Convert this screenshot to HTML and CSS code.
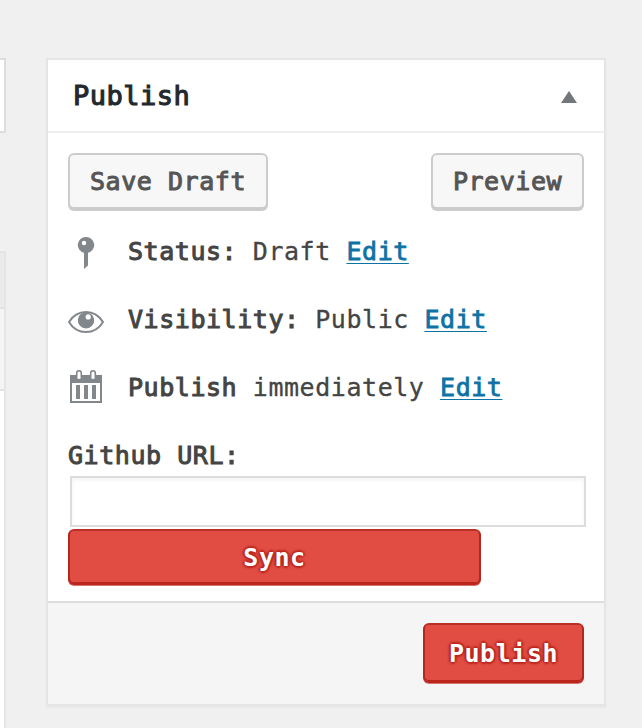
FILE: index.html
```html
<!DOCTYPE html>
<html lang="en">
<head>
<meta charset="utf-8">
<title>Publish</title>
<link rel="stylesheet" href="styles.css">
</head>
<body>
<div class="page">
  <div class="editor">
    <div class="title-field"></div>
    <div class="content-editor">
      <div class="tabs"></div>
      <div class="toolbar"></div>
      <div class="canvas"></div>
    </div>
  </div>
  <section class="postbox">
    <header class="postbox-header">
      <h2>Publish</h2>
      <svg class="toggle" width="16" height="12" viewBox="0 0 16 12"><path d="M8 0L16 12H0Z" fill="#72777c"/></svg>
    </header>
    <div class="postbox-body">
      <div class="actions">
        <button class="button save">Save Draft</button>
        <button class="button preview">Preview</button>
      </div>
      <div class="row">
        <svg class="icon" width="36" height="36" viewBox="0 0 36 36"><path fill="#82878c" fill-rule="evenodd" d="M18 2a8 8 0 0 1 2 15.8V30.5L16 34V17.8A8 8 0 0 1 18 2ZM16 5.8a2.2 2.2 0 1 0 0 4.4a2.2 2.2 0 1 0 0-4.4Z"/></svg>
        <p><b>Status:</b> Draft <a href="#">Edit</a></p>
      </div>
      <div class="row">
        <svg class="icon" width="36" height="36" viewBox="0 0 36 36"><path fill="none" stroke="#82878c" stroke-width="2" d="M1 19C9 5.600 27 5.600 35 19C27 32.400 9 32.400 1 19Z"/><path fill="#82878c" fill-rule="evenodd" d="M13 10.800Q18 8.300 23 10.800A8.200 8.200 0 1 1 13 10.800ZM20.200 11.300a2.600 2.600 0 1 0 0 5.200a2.600 2.600 0 1 0 0-5.200Z"/></svg>
        <p><b>Visibility:</b> Public <a href="#">Edit</a></p>
      </div>
      <div class="row">
        <svg class="icon calendar" width="36" height="36" viewBox="0 0 36 36"><path fill="#82878c" fill-rule="evenodd" d="M2 7H34V35H2ZM4 15V33H32V15Z"/><path fill="#82878c" d="M8 17h4v14H8zM16 17h4v14h-4zM24 17h4v14h-4z"/><g fill="none" stroke-linecap="round"><path stroke="#fff" stroke-width="4" d="M11 5V9M25 5V9"/><path stroke="#82878c" stroke-width="1.600" d="M8.700 9V5a2.300 2.300 0 0 1 4.600 0V9M22.700 9V5a2.300 2.300 0 0 1 4.600 0V9"/></g></svg>
        <p><b>Publish</b> immediately <a href="#">Edit</a></p>
      </div>
      <label class="url-label" for="url">Github URL:</label>
      <input class="url" id="url" type="text">
      <button class="button primary sync">Sync</button>
    </div>
    <footer class="postbox-footer">
      <button class="button primary publish">Publish</button>
    </footer>
  </section>
</div>
</body>
</html>
```
FILE: styles.css
```css
* { box-sizing: border-box; }

body {
  margin: 0;
  background: #f0f0f0;
  color: #444;
  font: 25px/34px "DejaVu Sans Mono", "Liberation Mono", monospace;
  letter-spacing: 0.55px;
  -webkit-text-stroke: 0.3px currentColor;
}

.page {
  display: grid;
  grid-template-columns: 6px 560px;
  column-gap: 40px;
  height: 728px;
  padding-top: 58px;
  overflow: hidden;
}

.editor { display: flex; flex-direction: column; }

.title-field {
  height: 75px;
  margin-bottom: 118px;
  border: 2px solid #ddd;
  border-left: 0;
  background: #fff;
}

.content-editor {
  flex: 1;
  display: flex;
  flex-direction: column;
  border: 2px solid #e5e5e5;
  border-width: 2px 2px 0 0;
}

.tabs { height: 54px; background: #ebebeb; }

.toolbar {
  height: 84px;
  border: 2px solid #e2e2e2;
  border-width: 2px 0;
  background: #f5f5f5;
}

.canvas { flex: 1; background: #fff; }

.postbox {
  height: 648px;
  border: 2px solid #e5e5e5;
  background: #fff;
  box-shadow: 0 2px 2px rgba(0, 0, 0, 0.04);
}

.postbox-header {
  display: flex;
  align-items: center;
  justify-content: space-between;
  height: 73px;
  padding: 1px 27px 0 25px;
  border-bottom: 2px solid #eee;
}

h2 {
  margin: 0;
  color: #23282d;
  font-size: 27px;
  font-weight: 400;
  letter-spacing: 0.5px;
  -webkit-text-stroke: 1.1px currentColor;
}

.toggle { margin-top: 1px; }

.postbox-body {
  display: flex;
  flex-direction: column;
  height: 468px;
  padding: 20px 20px 0;
}

.actions {
  display: flex;
  justify-content: space-between;
  margin-bottom: 26px;
}

.button {
  height: 56px;
  padding: 1px 0 0;
  border: 2px solid #ccc;
  border-radius: 6px;
  background: #f7f7f7;
  box-shadow: 0 2px 0 #ccc;
  color: #555;
  font: inherit;
  letter-spacing: inherit;
  -webkit-text-stroke: 1px currentColor;
}

.save { width: 200px; }
.preview { width: 153px; }

.row {
  display: flex;
  gap: 24px;
  height: 68px;
}

.row p { margin: 0; white-space: pre; }

.calendar { margin-top: -3px; }

b, .url-label {
  font-weight: 400;
  -webkit-text-stroke: 1px currentColor;
}

a {
  color: #0e72a5;
  text-decoration-thickness: 1px;
  text-underline-offset: 3px;
  -webkit-text-stroke: 0.8px currentColor;
}

.url-label { height: 37px; }

.url {
  width: 516px;
  height: 51px;
  margin: 0 0 2px 2px;
  border: 2px solid #ddd;
  background: #fff;
  box-shadow: inset 0 2px 4px rgba(0, 0, 0, 0.05);
  font: inherit;
}

.primary {
  border-color: #ba3029 #b2271f #ba261e;
  background: #e14d43;
  box-shadow: inset 0 -1px 0 #ba261e, 0 1px 0 #d8746e;
  color: #fff;
  font-weight: 700;
  text-shadow: 0 -2px 2px #ba261e, 2px 0 2px #ba261e, 0 2px 2px #ba261e, -2px 0 2px #ba261e;
  -webkit-text-stroke: 0;
}

.sync { width: 413px; }

.postbox-footer {
  display: flex;
  justify-content: flex-end;
  height: 103px;
  padding: 20px 20px 0;
  border-top: 2px solid #ddd;
  background: #f5f5f5;
}

.publish { width: 161px; height: 60px; }
```
